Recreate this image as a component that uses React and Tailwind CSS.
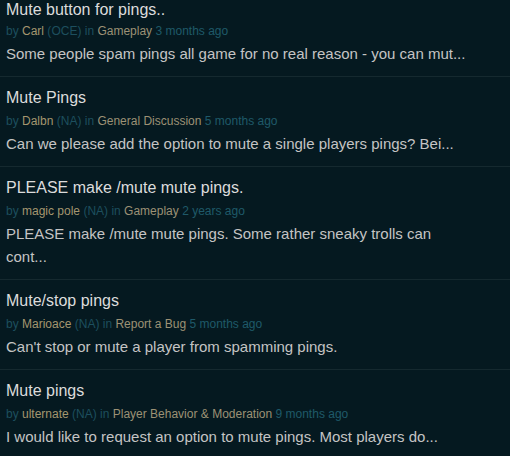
const POSTS = [
  {
    title: 'Mute button for pings..',
    author: 'Carl',
    region: 'OCE',
    category: 'Gameplay',
    time: '3 months ago',
    body: 'Some people spam pings all game for no real reason - you can mut...',
  },
  {
    title: 'Mute Pings',
    author: 'Dalbn',
    region: 'NA',
    category: 'General Discussion',
    time: '5 months ago',
    body: 'Can we please add the option to mute a single players pings? Bei...',
  },
  {
    title: 'PLEASE make /mute mute pings.',
    author: 'magic pole',
    region: 'NA',
    category: 'Gameplay',
    time: '2 years ago',
    body: 'PLEASE make /mute mute pings. Some rather sneaky trolls can\ncont...',
  },
  {
    title: 'Mute/stop pings',
    author: 'Marioace',
    region: 'NA',
    category: 'Report a Bug',
    time: '5 months ago',
    body: "Can't stop or mute a player from spamming pings.",
  },
  {
    title: 'Mute pings',
    author: 'ulternate',
    region: 'NA',
    category: 'Player Behavior & Moderation',
    time: '9 months ago',
    body: 'I would like to request an option to mute pings. Most players do...',
  },
];

function PostRow({ post, first, last }) {
  return (
    <div
      className={`px-[6px] ${first ? 'pt-0' : 'pt-[9px]'} pb-[11px] ${
        last ? '' : 'border-b border-[#15292f]'
      }`}
    >
      <div className={`text-[16px] text-[#dcdcdc] ${first ? 'leading-[20px]' : 'leading-[24px]'}`}>
        {post.title}
      </div>
      <div className="text-[12px] leading-[22px] text-[#1d4f5e]">
        by <span className="text-[#a4966f]">{post.author}</span> ({post.region}) in{' '}
        <span className="text-[#9c9175]">{post.category}</span>{' '}
        <span className="text-[#1f5969]">{post.time}</span>
      </div>
      <div className="text-[15px] leading-[23px] text-[#c4c4c4] whitespace-pre">{post.body}</div>
    </div>
  );
}

export default function App() {
  return (
    <div
      className="w-[510px] h-[456px] overflow-hidden bg-[#051920]"
      style={{ fontFamily: '"Liberation Sans", Arial, sans-serif' }}
    >
      {POSTS.map((p, i) => (
        <PostRow key={i} post={p} first={i === 0} last={i === POSTS.length - 1} />
      ))}
    </div>
  );
}
